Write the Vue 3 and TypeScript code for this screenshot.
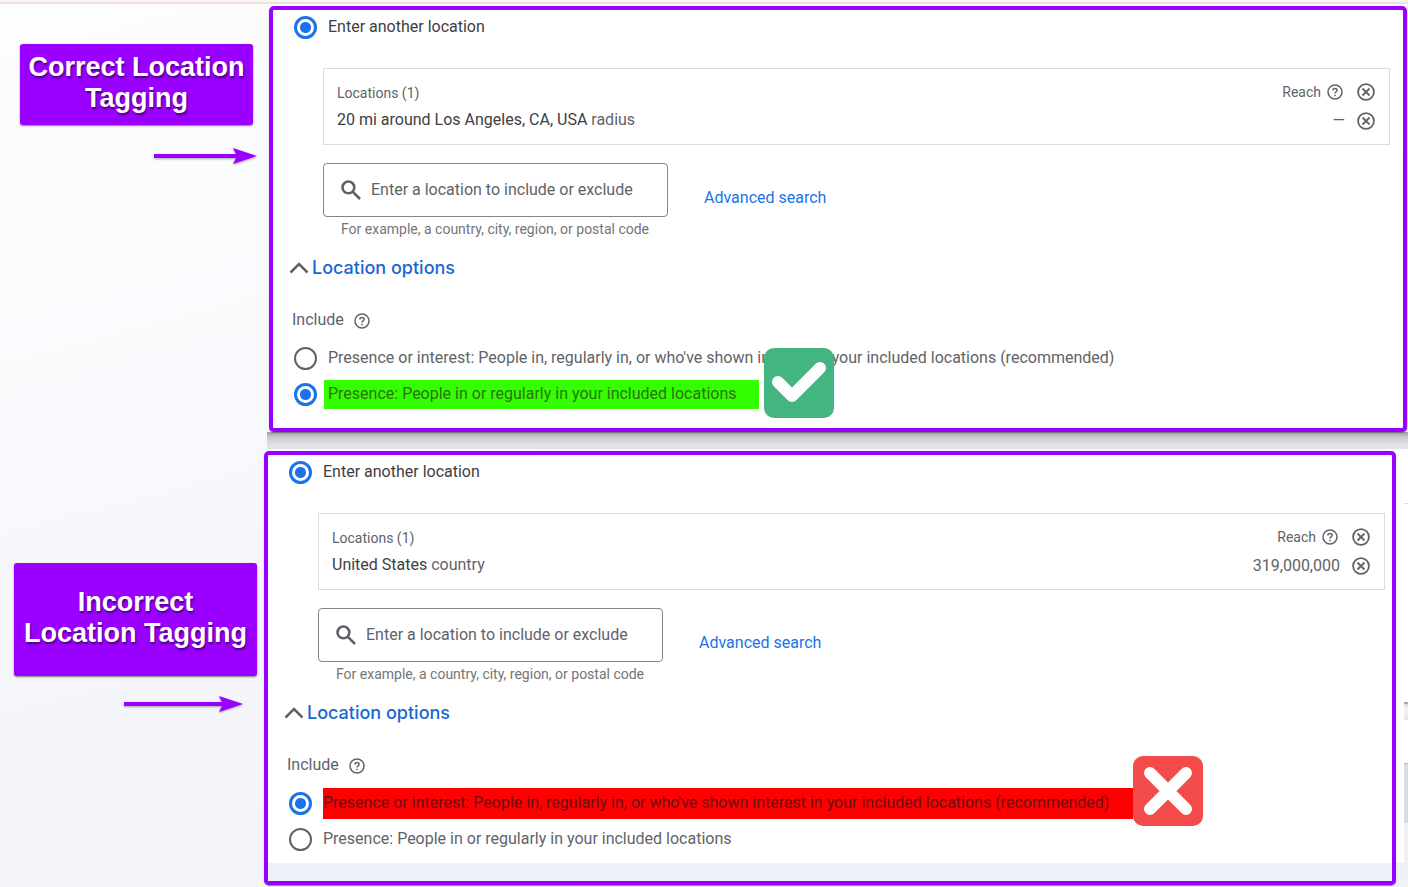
<script setup lang="ts">
interface Choice {
  text: string
  mark?: 'good' | 'bad'
}
interface Example {
  id: string
  caption: string
  place: string
  kind: string
  reach: string
  selected: number
  choices: Choice[]
}

const interest = "Presence or interest: People in, regularly in, or who've shown interest in your included locations (recommended)"
const presence = 'Presence: People in or regularly in your included locations'

const examples: Example[] = [
  {
    id: 'correct',
    caption: 'Correct Location Tagging',
    place: '20 mi around Los Angeles, CA, USA',
    kind: 'radius',
    reach: '—',
    selected: 1,
    choices: [{ text: interest }, { text: presence, mark: 'good' }],
  },
  {
    id: 'incorrect',
    caption: 'Incorrect Location Tagging',
    place: 'United States',
    kind: 'country',
    reach: '319,000,000',
    selected: 0,
    choices: [{ text: interest, mark: 'bad' }, { text: presence }],
  },
]
</script>

<template>
  <main class="page">
    <section v-for="ex in examples" :key="ex.id" class="example" :class="ex.id">
      <aside class="side">
        <h2 class="caption">{{ ex.caption }}</h2>
        <div class="arrow" aria-hidden="true">
          <span class="shaft"></span>
          <svg class="head" width="24" height="18" viewBox="0 0 24 18"><path d="M0 1 24 9 0 17 4 9Z" fill="#9900ff" /></svg>
        </div>
      </aside>

      <div class="panel">
        <label class="choice another">
          <input type="radio" class="radio" :name="ex.id + '-target'" checked />
          <span class="choice-text">Enter another location</span>
        </label>

        <table class="locations">
          <thead>
            <tr>
              <th class="name" scope="col">Locations (1)</th>
              <th class="reach" scope="col">
                <span class="reach-head">
                  Reach
                  <button class="icon" type="button" aria-label="About reach">
                    <svg width="16" height="16" viewBox="0 0 16 16" fill="none" stroke="#5f6368" stroke-width="1.5">
                      <circle cx="8" cy="8" r="7" />
                      <path d="M5.9 6.5c0-1.3.9-2.1 2.1-2.1s2.1.8 2.1 1.9c0 1.5-2.1 1.7-2.1 3.3" />
                      <path d="M8 10.7v1.5" />
                    </svg>
                  </button>
                </span>
              </th>
              <th class="remove">
                <button class="icon" type="button" aria-label="Remove all locations">
                  <svg width="18" height="18" viewBox="0 0 18 18" fill="none" stroke="#5f6368" stroke-width="1.8">
                    <circle cx="9" cy="9" r="7.9" />
                    <path d="m5.5 5.5 7 7m0-7-7 7" />
                  </svg>
                </button>
              </th>
            </tr>
          </thead>
          <tbody>
            <tr>
              <td class="name">{{ ex.place }} <span class="kind">{{ ex.kind }}</span></td>
              <td class="reach">{{ ex.reach }}</td>
              <td class="remove">
                <button class="icon" type="button" aria-label="Remove location">
                  <svg width="18" height="18" viewBox="0 0 18 18" fill="none" stroke="#5f6368" stroke-width="1.8">
                    <circle cx="9" cy="9" r="7.9" />
                    <path d="m5.5 5.5 7 7m0-7-7 7" />
                  </svg>
                </button>
              </td>
            </tr>
          </tbody>
        </table>

        <div class="search-row">
          <div class="search">
            <svg width="20" height="20" viewBox="0 0 20 20" fill="none" stroke="#5f6368" stroke-width="2.6" aria-hidden="true">
              <circle cx="7.4" cy="7.4" r="5.9" />
              <path d="m11.6 11.6 7.4 7.4" />
            </svg>
            <input
              type="text"
              class="search-input"
              aria-label="Location"
              :aria-describedby="ex.id + '-hint'"
              placeholder="Enter a location to include or exclude"
            />
          </div>
          <a class="advanced" href="#">Advanced search</a>
        </div>
        <p :id="ex.id + '-hint'" class="hint">For example, a country, city, region, or postal code</p>

        <button class="toggle" type="button" aria-expanded="true">
          <svg width="20" height="12" viewBox="0 0 20 12" fill="none" stroke="#5f6368" stroke-width="2.5" aria-hidden="true">
            <path d="m1.5 10.5 8.5-8.5 8.5 8.5" />
          </svg>
          Location options
        </button>

        <div class="include">
          <span :id="ex.id + '-include'">Include</span>
          <button class="icon" type="button" aria-label="About include">
            <svg width="16" height="16" viewBox="0 0 16 16" fill="none" stroke="#5f6368" stroke-width="1.5">
              <circle cx="8" cy="8" r="7" />
              <path d="M5.9 6.5c0-1.3.9-2.1 2.1-2.1s2.1.8 2.1 1.9c0 1.5-2.1 1.7-2.1 3.3" />
              <path d="M8 10.7v1.5" />
            </svg>
          </button>
        </div>

        <div class="choices" role="radiogroup" :aria-labelledby="ex.id + '-include'">
          <label v-for="(choice, i) in ex.choices" :key="i" class="choice">
            <input type="radio" class="radio" :name="ex.id + '-include'" :checked="ex.selected === i" />
            <span class="choice-text" :class="choice.mark">
              {{ choice.text }}
              <svg v-if="choice.mark === 'good'" class="badge" viewBox="0 0 70 70" aria-hidden="true">
                <rect width="70" height="70" rx="10" fill="#44b581" />
                <path d="M14 34 28 48 56 20" fill="none" stroke="#fff" stroke-width="12" stroke-linecap="round" stroke-linejoin="round" />
              </svg>
              <svg v-if="choice.mark === 'bad'" class="badge" viewBox="0 0 70 70" aria-hidden="true">
                <rect width="70" height="70" rx="10" fill="#f34b49" />
                <path d="M17 17 53 53M53 17 17 53" fill="none" stroke="#fff" stroke-width="12" stroke-linecap="round" />
              </svg>
            </span>
          </label>
        </div>
        <div v-if="ex.id === 'incorrect'" class="footer-band"></div>
      </div>

      <div class="edge" aria-hidden="true"></div>
    </section>
  </main>
</template>

<style>
body {
  margin: 0;
  background: #f2f4f9;
}
</style>

<style scoped>
.page {
  box-sizing: border-box;
  min-height: 100vh;
  border-top: 2px solid #fcf4f1;
  padding-bottom: 2px;
  background: linear-gradient(165deg, #fdfdfe 0, #fafbfd 25%, #f4f6fb 55%, #f1f3f9 100%);
  font-family: Roboto, "Liberation Sans", sans-serif;
  font-size: 16px;
  line-height: 24px;
  color: #5f6368;
}
.page::before {
  content: "";
  display: block;
  height: 2px;
  margin-bottom: 2px;
  background: #ece1de;
}
.example {
  display: grid;
  grid-template-columns: 264px minmax(0, 1fr) auto;
}
.side {
  display: flex;
  flex-direction: column;
  align-items: flex-end;
}
.caption {
  box-sizing: border-box;
  margin: 0;
  border-radius: 3px;
  background: #9900ff;
  box-shadow: 0 1px 2px rgba(0, 0, 0, 0.5);
  color: #fff;
  font: bold 27px/31px "Liberation Sans", Arial, sans-serif;
  text-align: center;
  text-shadow: 1px 2px 2px rgba(0, 0, 0, 0.5);
}
.correct .caption {
  width: 233px;
  margin: 38px 11px 0 0;
  padding: 8px 4px 11px;
}
.incorrect .caption {
  width: 243px;
  margin: 112px 7px 0 0;
  padding: 24px 4px 27px;
}
.arrow {
  display: flex;
  align-items: center;
  filter: drop-shadow(0 1px 1px rgba(0, 0, 0, 0.35));
}
.correct .arrow {
  width: 103px;
  margin: 22px 7px 0 0;
}
.incorrect .arrow {
  width: 119px;
  margin: 19px 21px 0 0;
}
.shaft {
  flex: 1;
  height: 4px;
  margin-right: -5px;
  background: #9900ff;
}
.panel {
  position: relative;
  border: 4px solid #9900ff;
  border-radius: 5px;
  padding: 6px 13px 16px 50px;
  background: #fff;
  box-shadow: 0 1px 1px rgba(70, 70, 90, 0.6);
}
.correct .panel {
  margin-left: 5px;
}
.incorrect .panel {
  padding: 6px 7px 0 50px;
}
.correct .edge {
  width: 1px;
}
.correct::after {
  content: "";
  grid-column: 2 / 4;
  height: 17px;
  margin: 0 0 2px 3px;
  background: linear-gradient(#a0a2a4, #cccecf 35%, #e2e4e6 80%);
}
.incorrect .edge {
  display: flex;
  justify-content: flex-end;
  width: 12px;
  margin-top: -2px;
  background: linear-gradient(#fff 414px, #eef1f8 414px);
}
.incorrect .edge::after {
  content: "";
  width: 4px;
  background: linear-gradient(
    #fff 54px,
    #dadce0 54px 55px,
    #fff 55px 253px,
    #a9a9ab 253px 255px,
    #dcdcde 255px,
    #f1f1f4 260px,
    #e6e6e6 271px,
    #fff 271px 314px,
    #b3b5bb 314px 315px,
    #d8dce8 315px 374px,
    #eef1f8 374px
  );
}
.choice {
  display: flex;
  align-items: center;
  gap: 11px;
  height: 36px;
  margin-left: -29px;
}
.another {
  height: 23px;
  color: #3c4043;
}
.radio {
  appearance: none;
  flex: none;
  width: 23px;
  height: 23px;
  margin: 0;
  border: 2px solid #5f6368;
  border-radius: 50%;
  background: #fff;
}
.radio:checked {
  border-width: 3px;
  border-color: #1a73e8;
  background: radial-gradient(circle, #1a73e8 0 5px, #fff 6px);
}
.choice-text {
  position: relative;
  white-space: nowrap;
}
.another .choice-text {
  margin-top: -2px;
}
.good {
  margin-left: -4px;
  padding: 2px 22px 3px 4px;
  background: #33ff00;
  color: #2b7411;
}
.bad {
  padding: 3px 24px 4px 0;
  background: #ff0000;
  color: #6b0d10;
}
.badge {
  position: absolute;
  left: 100%;
  top: -32px;
  width: 70px;
  height: 70px;
}
.good .badge {
  left: calc(100% + 5px);
}
.locations {
  box-sizing: border-box;
  width: 100%;
  margin-top: 29px;
  border: 1px solid #dadce0;
  border-spacing: 0;
  border-collapse: separate;
  padding: 8px 14px 9px 13px;
}
.locations th,
.locations td {
  box-sizing: border-box;
  height: 29px;
  padding: 0;
  font-weight: 400;
  vertical-align: middle;
}
.locations th {
  font-size: 14px;
}
.locations .name {
  text-align: left;
}
.locations th.name {
  padding-top: 2px;
}
.locations td.name,
.locations th.remove {
  padding-bottom: 2px;
}
td.name {
  color: #3c4043;
}
.kind {
  color: #5f6368;
}
.reach {
  text-align: right;
}
.reach-head {
  display: flex;
  justify-content: flex-end;
  align-items: center;
  gap: 6px;
  padding-right: 2px;
}
.locations .remove {
  width: 30px;
  text-align: right;
}
.icon {
  display: inline-flex;
  padding: 0;
  border: 0;
  background: none;
  vertical-align: middle;
}
.search-row {
  display: flex;
  align-items: center;
  margin-top: 18px;
}
.search {
  box-sizing: border-box;
  display: flex;
  align-items: center;
  gap: 10px;
  width: 345px;
  height: 54px;
  border: 1px solid #80868b;
  border-radius: 4px;
  padding: 0 17px;
}
.search-input {
  flex: 1;
  min-width: 0;
  border: 0;
  padding: 0;
  background: none;
  font: inherit;
  color: inherit;
  outline: none;
}
.search-input::placeholder {
  color: #5f6368;
  opacity: 1;
}
.advanced {
  margin: 16px 0 0 36px;
  color: #1a73e8;
  text-decoration: none;
}
.hint {
  margin: 4px 0 0 18px;
  font-size: 14px;
  line-height: 16px;
  color: #757575;
}
.toggle {
  display: flex;
  align-items: center;
  gap: 3px;
  margin: 19px 0 0 -34px;
  border: 0;
  padding: 0;
  background: none;
  font: 500 18px/24px Inter, Roboto, sans-serif;
  color: #1967d2;
}
.include {
  display: flex;
  align-items: center;
  gap: 10px;
  margin: 28px 0 8px -31px;
}
.include .icon {
  margin-top: 2px;
}
.footer-band {
  height: 18px;
  margin: 6px -7px 0 -50px;
  background: #eef1f8;
}
</style>
